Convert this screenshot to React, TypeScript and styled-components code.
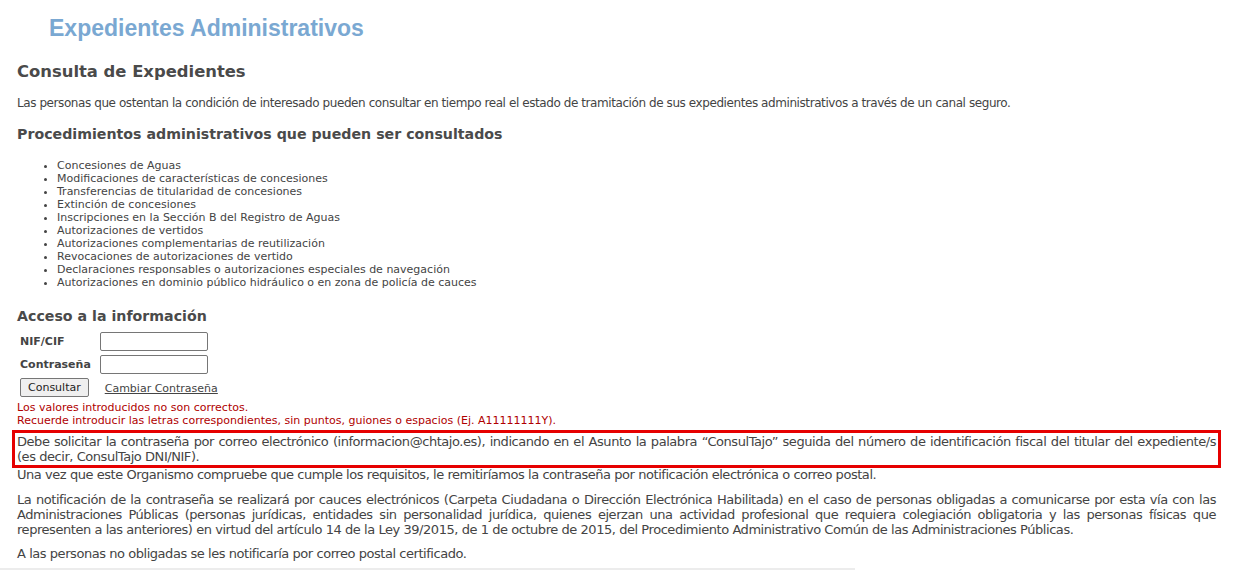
import React from "react";
import styled, { createGlobalStyle } from "styled-components";

const Global = createGlobalStyle`
  html, body { margin: 0; padding: 0; background: #fff; }
  body { font-family: "DejaVu Sans", Verdana, sans-serif; color: #444; }
`;

const Page = styled.div`
  width: 1245px;
  height: 571px;
  overflow: hidden;
  display: flex;
  flex-direction: column;
`;

const Header = styled.header`
  padding: 15px 0 0 49px;
  height: 29px;
`;

const Title = styled.h1`
  margin: 0;
  font-family: "Liberation Sans", Arial, sans-serif;
  font-weight: bold;
  font-size: 23px;
  line-height: 26px;
  color: #7aa8d2;
`;

const Content = styled.main`
  padding: 0 29px 0 17px;
  flex: 1;
`;

const H2 = styled.h2`
  margin: 18px 0 0 0;
  font-size: 16.4px;
  line-height: 20px;
  font-weight: bold;
  color: #4a4a4a;
`;

const H3 = styled.h3<{ $top: number }>`
  margin: ${(p) => p.$top}px 0 0 0;
  font-size: 14.2px;
  line-height: 18px;
  font-weight: bold;
  color: #4a4a4a;
`;

const P = styled.p<{ $top: number; $justify?: boolean; $large?: boolean }>`
  margin: ${(p) => p.$top}px 0 0 0;
  font-size: ${(p) => (p.$large ? "13px" : "12px")};
  letter-spacing: ${(p) => (p.$large ? "-0.45px" : "-0.42px")};
  line-height: 15px;
  color: #444;
  text-align: ${(p) => (p.$justify ? "justify" : "left")};
`;

const List = styled.ul`
  margin: 16px 0 0 0;
  padding: 0 0 0 40px;
  font-size: 11px;
  line-height: 13px;
  color: #444;
  list-style: disc;
`;

const Item = styled.li``;

const Form = styled.form`
  margin-top: 7px;
  display: grid;
  grid-template-columns: 80px 110px;
  row-gap: 4px;
  align-items: center;
  padding-left: 3px;
`;

const Label = styled.label`
  font-size: 11px;
  font-weight: bold;
  color: #444;
`;

const Input = styled.input`
  width: 108px;
  height: 19px;
  box-sizing: border-box;
  border: 1px solid #767676;
  border-radius: 2px;
  padding: 1px 3px;
  font-size: 11px;
`;

const Actions = styled.div`
  grid-column: 1 / span 2;
  display: flex;
  align-items: center;
  gap: 16px;
  white-space: nowrap;
  height: 19px;
`;

const Button = styled.button`
  height: 19px;
  padding: 0 7px;
  font-family: "DejaVu Sans", Verdana, sans-serif;
  font-size: 11px;
  color: #222;
  background: #efefef;
  border: 1px solid #767676;
  border-radius: 2px;
`;

const Link = styled.a`
  font-size: 11px;
  color: #444;
  text-decoration: underline;
  margin-top: 2px;
`;

const Errors = styled.div`
  margin-top: 4px;
  font-size: 11px;
  line-height: 13px;
  color: #b00000;
`;

const Notice = styled.div`
  margin: 3px -5px -1px -5px;
  border: 3px solid #e60000;
  padding: 1px 2px;
  font-size: 13px;
  letter-spacing: -0.45px;
  line-height: 15px;
  color: #444;
  text-align: justify;
`;

const Footer = styled.div`
  height: 2px;
  width: 855px;
  background: #ececec;
  margin-top: auto;
  margin-bottom: 1px;
`;

const items = [
  "Concesiones de Aguas",
  "Modificaciones de características de concesiones",
  "Transferencias de titularidad de concesiones",
  "Extinción de concesiones",
  "Inscripciones en la Sección B del Registro de Aguas",
  "Autorizaciones de vertidos",
  "Autorizaciones complementarias de reutilización",
  "Revocaciones de autorizaciones de vertido",
  "Declaraciones responsables o autorizaciones especiales de navegación",
  "Autorizaciones en dominio público hidráulico o en zona de policía de cauces",
];

export default function App() {
  return (
    <Page>
      <Global />
      <Header>
        <Title>Expedientes Administrativos</Title>
      </Header>
      <Content>
        <H2>Consulta de Expedientes</H2>
        <P $top={14}>
          Las personas que ostentan la condición de interesado pueden consultar en tiempo real el estado de tramitación de sus expedientes administrativos a través de un canal seguro.
        </P>
        <H3 $top={14}>Procedimientos administrativos que pueden ser consultados</H3>
        <List>
          {items.map((t) => (
            <Item key={t}>{t}</Item>
          ))}
        </List>
        <H3 $top={18}>Acceso a la información</H3>
        <Form onSubmit={(e) => e.preventDefault()}>
          <Label>NIF/CIF</Label>
          <Input type="text" />
          <Label>Contraseña</Label>
          <Input type="password" />
          <Actions>
            <Button type="submit">Consultar</Button>
            <Link href="#">Cambiar Contraseña</Link>
          </Actions>
        </Form>
        <Errors>
          Los valores introducidos no son correctos.
          <br />
          Recuerde introducir las letras correspondientes, sin puntos, guiones o espacios (Ej. A11111111Y).
        </Errors>
        <Notice>
          Debe solicitar la contraseña por correo electrónico (informacion@chtajo.es), indicando en el Asunto la palabra “ConsulTajo” seguida del número de identificación fiscal del titular del expediente/s (es decir, ConsulTajo DNI/NIF).
        </Notice>
        <P $top={0} $large>
          Una vez que este Organismo compruebe que cumple los requisitos, le remitiríamos la contraseña por notificación electrónica o correo postal.
        </P>
        <P $top={10} $justify $large>
          La notificación de la contraseña se realizará por cauces electrónicos (Carpeta Ciudadana o Dirección Electrónica Habilitada) en el caso de personas obligadas a comunicarse por esta vía con las Administraciones Públicas (personas jurídicas, entidades sin personalidad jurídica, quienes ejerzan una actividad profesional que requiera colegiación obligatoria y las personas físicas que representen a las anteriores) en virtud del artículo 14 de la Ley 39/2015, de 1 de octubre de 2015, del Procedimiento Administrativo Común de las Administraciones Públicas.
        </P>
        <P $top={9} $large>A las personas no obligadas se les notificaría por correo postal certificado.</P>
      </Content>
      <Footer />
    </Page>
  );
}
